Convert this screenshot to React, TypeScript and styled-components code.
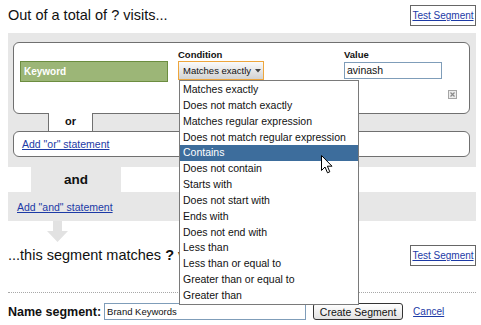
import React from "react";
import styled, { createGlobalStyle } from "styled-components";

const GlobalStyle = createGlobalStyle`
  html, body { margin: 0; padding: 0; background: #fff; }
  body { font-family: "Liberation Sans", Arial, sans-serif; color: #111; }
  * { box-sizing: border-box; }
`;

const Page = styled.div`
  position: relative;
  width: 481px;
  height: 325px;
  padding: 0 5px 0 8px;
  overflow: hidden;
`;

const HeadRow = styled.div<{ $top: number }>`
  display: flex;
  align-items: center;
  justify-content: space-between;
  height: 21px;
  margin-top: ${(p) => p.$top}px;
`;

const Title = styled.h1`
  margin: 0 0 2px 0;
  font-size: 14.5px;
  font-weight: normal;
  line-height: 18px;
  color: #111;
  b { font-weight: bold; }
`;

const Link = styled.a<{ $size?: number }>`
  color: #1c3aa6;
  text-decoration: underline;
  font-size: ${(p) => p.$size ?? 10.5}px;
  cursor: pointer;
`;

const TestButton = styled.div`
  width: 66px;
  height: 21px;
  border: 1px solid #666;
  background: #fff;
  display: flex;
  align-items: center;
  justify-content: center;
`;

const Panel = styled.div`
  margin-top: 7px;
  background: #e7e7e7;
  padding: 9px 6px 10px 5px;
`;

const CondBox = styled.div`
  position: relative;
  background: #fff;
  border: 1px solid #707070;
  border-radius: 6px;
  padding: 6px 12px 14px 6px;
`;

const FieldRow = styled.div`
  display: flex;
  align-items: flex-start;
`;

const KeywordBar = styled.div`
  width: 148px;
  height: 21px;
  margin-top: 12px;
  background: #9cb677;
  border: 1px solid #6c8d40;
  color: #fff;
  font-weight: bold;
  font-size: 10px;
  line-height: 19px;
  padding-left: 3px;
`;

const Field = styled.div<{ $width: number; $gap: number }>`
  width: ${(p) => p.$width}px;
  margin-left: ${(p) => p.$gap}px;
`;

const Label = styled.div`
  height: 12px;
  line-height: 12px;
  font-size: 9.5px;
  font-weight: bold;
  color: #111;
`;

const SelectWrap = styled.div`
  position: relative;
  width: 86px;
`;

const Select = styled.div`
  height: 19px;
  border: 1px solid #eea63c;
  background: linear-gradient(#fbfbfb, #d2d2d2);
  display: flex;
  align-items: center;
  gap: 4px;
  padding-left: 4px;
  font-size: 9.5px;
  color: #111;
`;

const TextInput = styled.div<{ $width: number; $size: number }>`
  width: ${(p) => p.$width}px;
  height: 17px;
  border: 1px solid #7f9db9;
  background: #fff;
  font-size: ${(p) => p.$size}px;
  line-height: 15px;
  padding-left: 2px;
  color: #111;
`;

const ValueInput = styled(TextInput)`
  margin-top: 1px;
`;

const ActionsRow = styled.div`
  display: flex;
  justify-content: flex-end;
  margin-top: 8px;
  height: 9px;
`;

const OrTab = styled.div`
  position: relative;
  z-index: 1;
  margin: -1px 0 0 35px;
  width: 45px;
  height: 18px;
  background: #fff;
  border-left: 1px solid #707070;
  border-right: 1px solid #707070;
  font-size: 11px;
  font-weight: bold;
  text-align: center;
  line-height: 16px;
`;

const OrBox = styled.div`
  height: 26px;
  background: #fff;
  border: 1px solid #707070;
  border-radius: 6px;
  padding-left: 8px;
  display: flex;
  align-items: center;
`;

const AndTab = styled.div`
  margin-left: 23px;
  width: 90px;
  height: 25px;
  background: #e7e7e7;
  font-size: 13.5px;
  font-weight: bold;
  display: flex;
  align-items: center;
  justify-content: center;
`;

const AndPanel = styled.div`
  height: 29px;
  background: #e7e7e7;
  padding-left: 9px;
  display: flex;
  align-items: center;
`;

const ArrowWrap = styled.div`
  margin-left: 39px;
  height: 21px;
  svg { display: block; }
`;

const Divider = styled.div`
  margin-top: 26px;
  border-top: 1px dotted #a8a8a8;
`;

const Footer = styled.div`
  margin-top: 10px;
  display: flex;
  align-items: center;
  height: 17px;
`;

const NameLabel = styled.span`
  font-size: 12.5px;
  font-weight: bold;
  margin-right: 3px;
`;

const CreateButton = styled.div`
  margin-left: 7px;
  width: 90px;
  height: 17px;
  border: 1px solid #333;
  border-radius: 3px;
  background: linear-gradient(#ffffff, #e2e2e2);
  font-size: 10.5px;
  display: flex;
  align-items: center;
  justify-content: center;
  color: #111;
`;

const CancelLink = styled(Link)`
  margin-left: 10px;
`;

const List = styled.ul`
  position: absolute;
  z-index: 10;
  top: 19px;
  left: 1px;
  width: 180px;
  margin: 0;
  padding: 1px 0 0 0;
  list-style: none;
  background: #fff;
  border: 1px solid #7a7a7a;
`;

const Item = styled.li<{ $active?: boolean }>`
  height: 15.85px;
  line-height: 15.85px;
  padding-left: 3px;
  font-size: 10.5px;
  white-space: nowrap;
  color: ${(p) => (p.$active ? "#fff" : "#111")};
  background: ${(p) => (p.$active ? "#3d6d9c" : "transparent")};
`;

const Cursor = styled.svg`
  position: absolute;
  left: 141px;
  top: 74px;
`;

const options = [
  "Matches exactly",
  "Does not match exactly",
  "Matches regular expression",
  "Does not match regular expression",
  "Contains",
  "Does not contain",
  "Starts with",
  "Does not start with",
  "Ends with",
  "Does not end with",
  "Less than",
  "Less than or equal to",
  "Greater than or equal to",
  "Greater than",
];

export default function App() {
  return (
    <>
      <GlobalStyle />
      <Page>
        <HeadRow $top={5}>
          <Title>Out of a total of ? visits...</Title>
          <TestButton>
            <Link $size={10}>Test Segment</Link>
          </TestButton>
        </HeadRow>

        <Panel>
          <CondBox>
            <FieldRow>
              <KeywordBar>Keyword</KeywordBar>
              <Field $width={166} $gap={10}>
                <Label>Condition</Label>
                <SelectWrap>
                  <Select>
                    <span>Matches exactly</span>
                    <svg width="6" height="4" viewBox="0 0 6 4">
                      <path d="M0 0 L6 0 L3 3.5 Z" fill="#444" />
                    </svg>
                  </Select>
                  <List>
                    {options.map((o) => (
                      <Item key={o} $active={o === "Contains"}>
                        {o}
                      </Item>
                    ))}
                    <Cursor width="12" height="19" viewBox="0 0 12 19">
                      <path
                        d="M0.5 0.5 L0.5 15.5 L4 12 L6.5 17.8 L8.8 16.8 L6.4 11.2 L11 11.2 Z"
                        fill="#fff"
                        stroke="#000"
                        strokeWidth="1"
                        strokeLinejoin="miter"
                      />
                    </Cursor>
                  </List>
                </SelectWrap>
              </Field>
              <Field $width={98} $gap={0}>
                <Label>Value</Label>
                <ValueInput $width={98} $size={10.5}>avinash</ValueInput>
              </Field>
            </FieldRow>
            <ActionsRow>
              <svg width="9" height="9" viewBox="0 0 9 9">
                <rect x="0.5" y="0.5" width="8" height="8" fill="#ececec" stroke="#a5a5a5" />
                <path d="M2.5 2.5 L6.5 6.5 M6.5 2.5 L2.5 6.5" stroke="#8a8a8a" strokeWidth="1.2" />
              </svg>
            </ActionsRow>
          </CondBox>
          <OrTab>or</OrTab>
          <OrBox>
            <Link>Add "or" statement</Link>
          </OrBox>
        </Panel>

        <AndTab>and</AndTab>
        <AndPanel>
          <Link>Add "and" statement</Link>
        </AndPanel>
        <ArrowWrap>
          <svg width="21" height="21" viewBox="0 0 21 21">
            <path d="M6 0 L15 0 L15 10 L21 10 L10.5 21 L0 10 L6 10 Z" fill="#e2e2e2" />
          </svg>
        </ArrowWrap>

        <HeadRow $top={3}>
          <Title>
            ...this segment matches <b>?</b> visits
          </Title>
          <TestButton>
            <Link $size={10}>Test Segment</Link>
          </TestButton>
        </HeadRow>

        <Divider />

        <Footer>
          <NameLabel>Name segment:</NameLabel>
          <TextInput $width={202} $size={9.5}>Brand Keywords</TextInput>
          <CreateButton>Create Segment</CreateButton>
          <CancelLink $size={10}>Cancel</CancelLink>
        </Footer>
      </Page>
    </>
  );
}
